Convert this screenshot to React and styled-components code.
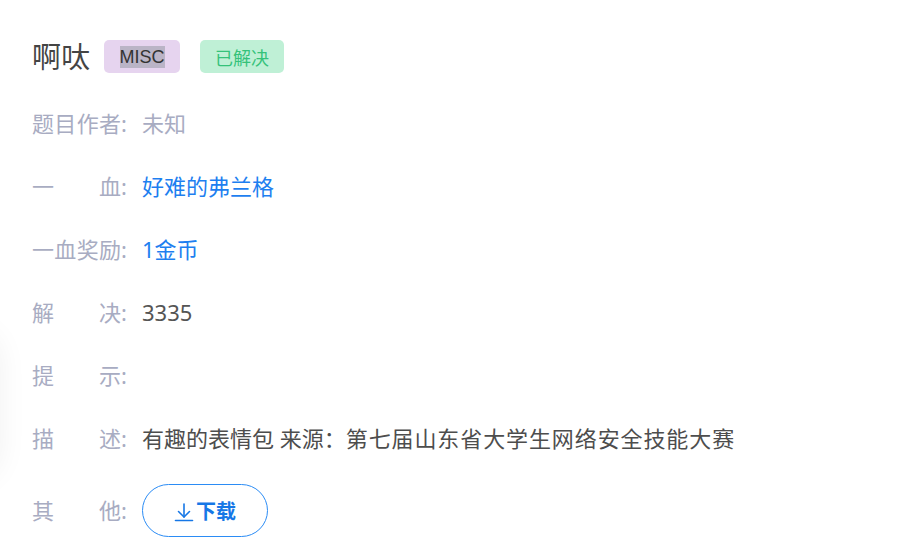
import React from 'react';
import styled, { createGlobalStyle } from 'styled-components';

const GlobalStyle = createGlobalStyle`
  html, body {
    margin: 0;
    padding: 0;
    background: #fff;
  }
  body {
    font-family: 'Noto Sans', 'Noto Sans CJK SC', sans-serif;
    overflow: hidden;
  }
`;

const Page = styled.div`
  position: relative;
  width: 923px;
  height: 560px;
  padding: 40px 0 0 32px;
  box-sizing: border-box;
  /* faint shadow of a card sitting off to the left */
  &::before {
    content: '';
    position: absolute;
    left: -60px;
    top: 330px;
    width: 60px;
    height: 150px;
    border-radius: 30px;
    box-shadow: 0 0 30px rgba(0, 0, 0, 0.06);
  }
`;

const TitleRow = styled.div`
  display: flex;
  align-items: center;
  height: 33px;
  margin-bottom: 19px;
`;

const Title = styled.h2`
  margin: 0 14px 0 0;
  font-size: 29px;
  font-weight: 400;
  color: #444;
  line-height: 33px;
`;

const Tag = styled.span`
  display: inline-flex;
  align-items: center;
  justify-content: center;
  box-sizing: border-box;
  height: 33px;
  width: ${(p) => p.$w}px;
  margin-right: 20px;
  border-radius: 5px;
  background: ${(p) => p.$bg};
  color: ${(p) => p.$color};
  font-family: ${(p) => (p.$latin ? "'Liberation Sans', Arial, sans-serif" : "'Noto Sans CJK SC', sans-serif")};
  font-size: 18px;
`;

const Highlight = styled.span`
  background: #bab4c6;
  line-height: 22px;
`;

const Row = styled.div`
  display: flex;
  align-items: center;
  padding: 14px 0;
  min-height: 35px;
`;

const Label = styled.span`
  display: flex;
  flex-shrink: 0;
  width: 96px;
  margin-right: 14px;
  font-size: 22px;
  color: #a8acc2;
  line-height: 35px;
  white-space: nowrap;
`;

const LabelText = styled.span`
  width: 89px;
  text-align: justify;
  text-align-last: justify;
`;

const Value = styled.span`
  font-size: 22px;
  line-height: 35px;
  color: ${(p) => p.$color || '#555'};
  white-space: nowrap;
`;

const Wide = styled.span`
  letter-spacing: 0.9px;
`;

const DownloadButton = styled.button`
  display: inline-flex;
  align-items: center;
  justify-content: center;
  gap: 2px;
  width: 126px;
  height: 53px;
  padding: 0;
  border: 1px solid #2b8cf5;
  border-radius: 27px;
  background: #fff;
  color: #1677e6;
  font-family: 'Noto Sans CJK SC', sans-serif;
  font-size: 20px;
  font-weight: 700;
  cursor: pointer;
  svg {
    margin-top: 2px;
  }
`;

const DownloadIcon = () => (
  <svg width="20" height="20" viewBox="0 0 20 20" fill="none" stroke="#1677e6" strokeWidth="1.6" strokeLinecap="round" strokeLinejoin="round">
    <path d="M10 2v13" />
    <path d="M4.5 9.5L10 15l5.5-5.5" />
    <path d="M1.5 18.5h17" />
  </svg>
);

const rows = [
  { label: '题目作者', value: '未知', color: '#a8acc2' },
  { label: '一血', value: '好难的弗兰格', color: '#1e7ff0' },
  { label: '一血奖励', value: '1金币', color: '#1e7ff0' },
  { label: '解决', value: '3335' },
  { label: '提示', value: '' },
];

const FieldLabel = ({ children }) => (
  <Label>
    <LabelText>{children}</LabelText>:
  </Label>
);

export default function App() {
  return (
    <Page>
      <GlobalStyle />
      <TitleRow>
        <Title>啊呔</Title>
        <Tag $w={76} $bg="#e6d4ef" $color="#333" $latin>
          <Highlight>MISC</Highlight>
        </Tag>
        <Tag $w={84} $bg="#bff0d6" $color="#35c27a">
          已解决
        </Tag>
      </TitleRow>
      {rows.map((r) => (
        <Row key={r.label}>
          <FieldLabel>{r.label}</FieldLabel>
          <Value $color={r.color}>{r.value}</Value>
        </Row>
      ))}
      <Row>
        <FieldLabel>描述</FieldLabel>
        <Value $color="#4d4d4d">
          有趣的表情包 来源：<Wide>第七届山东省大学生网络安全技能大赛</Wide>
        </Value>
      </Row>
      <Row>
        <FieldLabel>其他</FieldLabel>
        <DownloadButton>
          <DownloadIcon />
          下载
        </DownloadButton>
      </Row>
    </Page>
  );
}
